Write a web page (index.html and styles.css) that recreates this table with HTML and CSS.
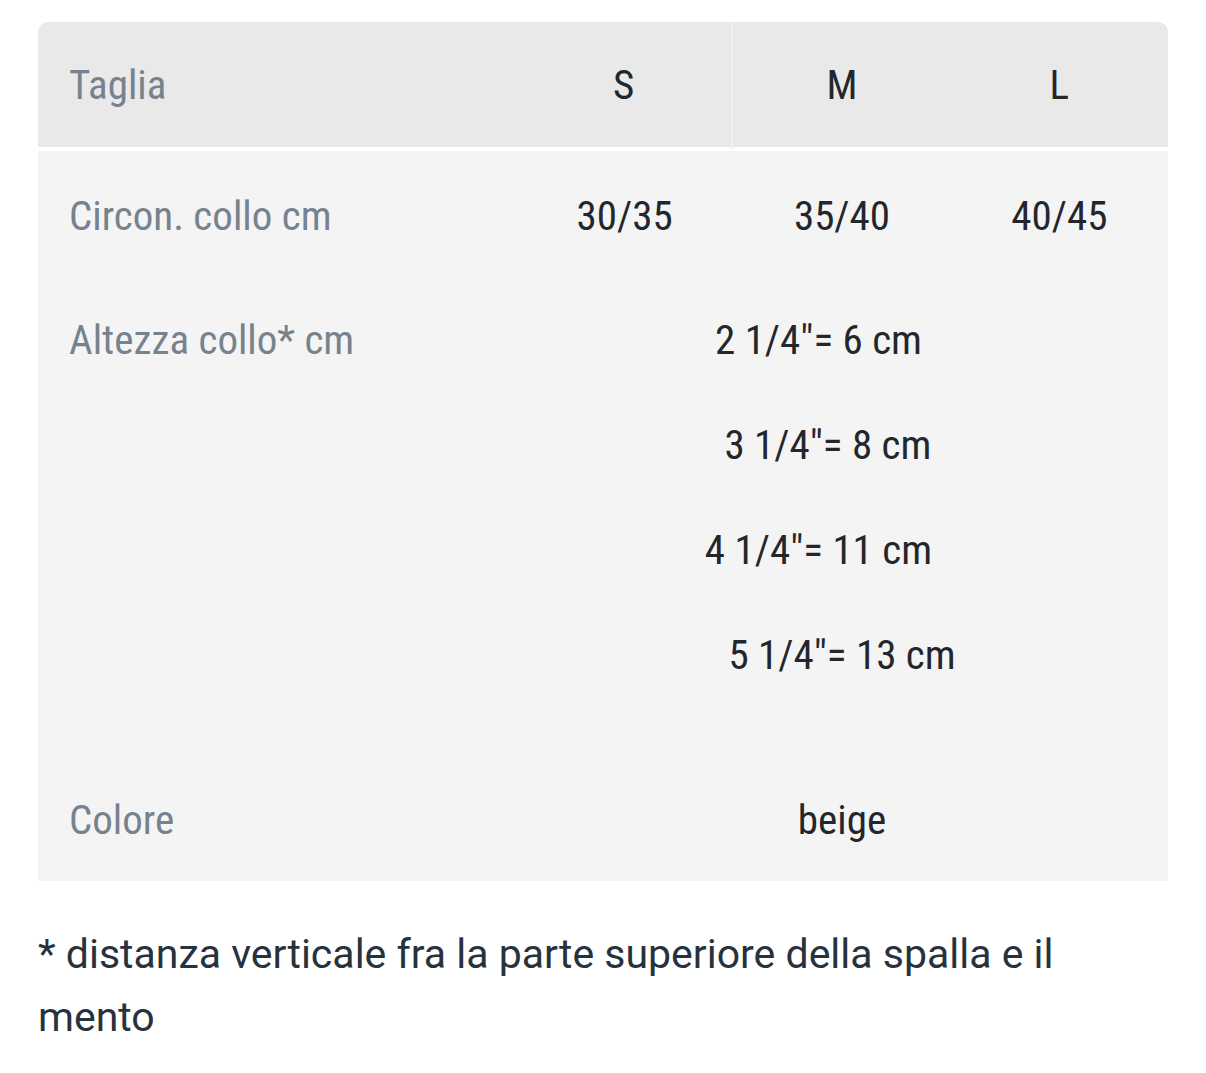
FILE: index.html
```html
<!DOCTYPE html>
<html lang="it">
<head>
<meta charset="utf-8">
<title>Tabella taglie</title>
<link rel="stylesheet" href="styles.css">
</head>
<body>
<div class="page">
  <table class="sizes">
    <thead>
      <tr class="head-row">
        <th class="label">Taglia</th>
        <th class="val sep-right">S</th>
        <th class="val">M</th>
        <th class="val">L</th>
      </tr>
    </thead>
    <tbody>
      <tr class="row-circ">
        <td class="label">Circon. collo cm</td>
        <td class="val">30/35</td>
        <td class="val faint-left faint-right">35/40</td>
        <td class="val">40/45</td>
      </tr>
      <tr class="row-alt">
        <td class="label">Altezza collo* cm</td>
        <td class="val multi" colspan="3">
          <p>2 1/4"= 6 cm&nbsp;&nbsp;&nbsp;&nbsp;&nbsp;</p>
          <p>3 1/4"= 8 cm&nbsp;&nbsp;&nbsp;</p>
          <p>4 1/4"= 11 cm&nbsp;&nbsp;&nbsp;&nbsp;&nbsp;</p>
          <p>5 1/4"= 13 cm</p>
        </td>
      </tr>
      <tr class="row-col">
        <td class="label">Colore</td>
        <td class="val" colspan="3">beige</td>
      </tr>
    </tbody>
  </table>
  <p class="note">* distanza verticale fra la parte superiore della spalla e il mento</p>
</div>
</body>
</html>
```
FILE: styles.css
```css
html, body {
  margin: 0;
  padding: 0;
  background: #ffffff;
}

.page {
  padding: 22px 38px 0 38px;
}

.sizes {
  width: 1130px;
  border-collapse: separate;
  border-spacing: 0;
  table-layout: fixed;
  font-family: "Roboto Condensed", "Roboto", "Liberation Sans", sans-serif;
  font-stretch: 75%;
  font-size: 41px;
  line-height: 48px;
}

.sizes th,
.sizes td {
  font-weight: 400;
  padding: 0;
}

.label {
  width: 447px;
  text-align: left;
  padding-left: 31px !important;
  color: #76838e;
}

.val {
  text-align: center;
  color: #23272b;
}

.head-row th {
  background: #e9e9e9;
  height: 125px;
  border-bottom: 4px solid #ffffff;
}

.head-row th:first-child {
  border-top-left-radius: 10px;
}

.head-row th:last-child {
  border-top-right-radius: 10px;
}

.head-row .sep-right {
  border-right: 2px solid #efefef;
}

.sizes tbody td {
  background: #f4f4f4;
}

.row-circ td {
  height: 122px;
  padding-top: 4px;
}

.row-circ .faint-left {
  border-left: 1px solid #f1f1f1;
}

.row-circ .faint-right {
  border-right: 1px solid #f1f1f1;
}

.row-alt td {
  vertical-align: top;
  padding-top: 39px;
  padding-bottom: 25px;
}

.row-alt .label {
  padding-top: 39px;
}

.multi p {
  margin: 0 0 57px 0;
  white-space: nowrap;
}

.row-col td {
  height: 115px;
  padding-bottom: 4px;
  border-top: 1px solid #f2f2f2;
}

.note {
  margin: 42px 0 0 0;
  max-width: 1090px;
  font-family: "Roboto", "Liberation Sans", sans-serif;
  font-size: 41px;
  line-height: 63px;
  color: #27323d;
}
```
